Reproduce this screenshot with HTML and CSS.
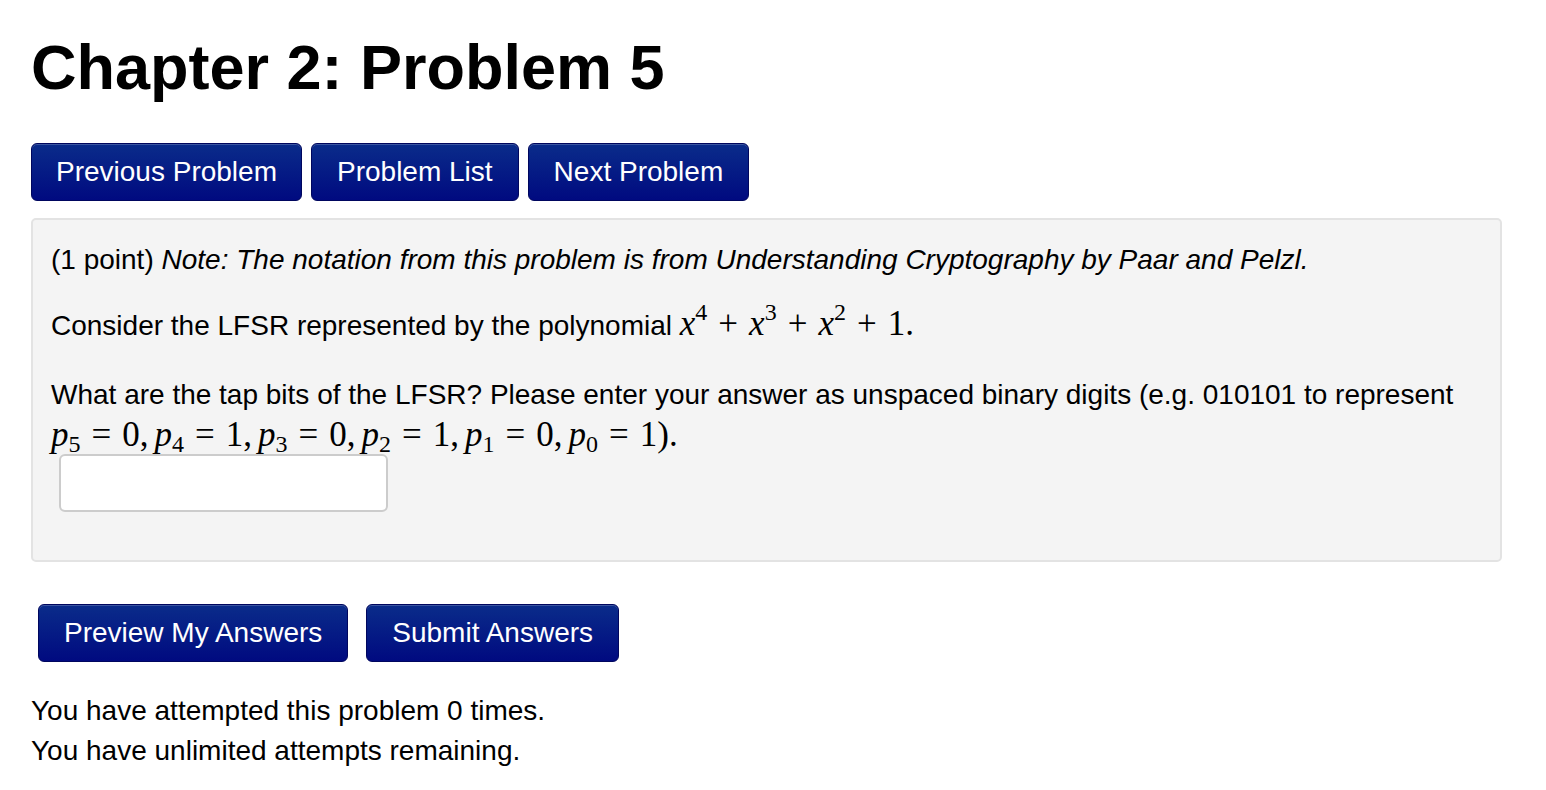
FILE: index.html
```html
<!DOCTYPE html>
<html>
<head>
    <meta charset="UTF-8">
    <title>Chapter 2: Problem 5</title>
    <link rel="stylesheet" href="styles.css">
</head>
<body>
<div class="page">
    <h1 class="title">Chapter 2: Problem 5</h1>

    <div class="nav-buttons">
        <a class="btn" href="#">Previous Problem</a>
        <a class="btn" href="#">Problem List</a>
        <a class="btn" href="#">Next Problem</a>
    </div>

    <!-- текст задачи -->
    <div class="problem">
        <p>(1 point) <i>Note: The notation from this problem is from Understanding Cryptography by Paar and Pelzl.</i></p>
        <p class="poly">Consider the LFSR represented by the polynomial <span class="math"><i>x</i><sup>4</sup><span class="op">+</span><i>x</i><sup>3</sup><span class="op">+</span><i>x</i><sup>2</sup><span class="op">+</span>1.</span></p>
        <p class="tight">What are the tap bits of the LFSR? Please enter your answer as unspaced binary digits (e.g. 010101 to represent
        <span class="math"><i>p</i><sub>5</sub><span class="rel">=</span>0,<span class="th"></span><i>p</i><sub>4</sub><span class="rel">=</span>1,<span class="th"></span><i>p</i><sub>3</sub><span class="rel">=</span>0,<span class="th"></span><i>p</i><sub>2</sub><span class="rel">=</span>1,<span class="th"></span><i>p</i><sub>1</sub><span class="rel">=</span>0,<span class="th"></span><i>p</i><sub>0</sub><span class="rel">=</span>1).</span></p>
        <input type="text" class="answer">
    </div>

    <div class="submit-buttons">
        <button class="btn">Preview My Answers</button>
        <button class="btn">Submit Answers</button>
    </div>

    <div class="attempts">
        <p>You have attempted this problem 0 times.</p>
        <p>You have unlimited attempts remaining.</p>
    </div>
</div>
</body>
</html>
```

FILE: styles.css
```css
body {
  margin: 0;
  background: #fff;
  color: #000;
  font-family: "Liberation Sans", Arial, sans-serif;
  font-size: 28px;
}

.page {
  padding: 22px 44px 0 31px;
}

.title {
  font-size: 63px;
  font-weight: bold;
  margin: 0;
  line-height: 90px;
}

/* кнопки */
.btn {
  display: inline-flex;
  align-items: center;
  justify-content: center;
  box-sizing: border-box;
  height: 58px;
  padding: 0 25px;
  border: 1px solid #00065e;
  border-radius: 6px;
  background: linear-gradient(#0a2c8a, #000a80);
  color: #fff;
  font-family: "Liberation Sans", Arial, sans-serif;
  font-size: 28px;
  text-decoration: none;
  box-shadow: inset 0 1px 0 rgba(255,255,255,0.2);
}

.nav-buttons .btn:first-child {
  padding: 0 24px;
}

.nav-buttons {
  display: flex;
  gap: 9px;
  margin-top: 31px;
}

.problem {
  margin-top: 17px;
  background: #f4f4f4;
  border: 2px solid #e3e3e3;
  border-radius: 5px;
  padding: 19px 18px 48px 18px;
  line-height: 42px;
}

.problem p {
  margin: 0 0 24px 0;
}

.problem p.poly {
  margin-bottom: 27px;
}

.problem p.tight {
  margin-bottom: 0;
}

/* формулы */
.math {
  font-family: "Liberation Serif", "Times New Roman", serif;
  font-size: 35px;
  line-height: 1;
  white-space: nowrap;
}

.math sup, .math sub {
  font-size: 24px;
  line-height: 0;
}

.math sup {
  vertical-align: 15px;
}

.math sub {
  vertical-align: -6px;
}

.math .op {
  margin: 0 11px;
}

.math .rel {
  margin: 0 11px;
}

.math .th {
  display: inline-block;
  width: 6px;
}

.answer {
  display: block;
  box-sizing: border-box;
  width: 329px;
  height: 58px;
  margin: -4px 0 0 8px;
  border: 2px solid #ccc;
  border-radius: 6px;
  background: #fff;
}

.submit-buttons {
  display: flex;
  gap: 18px;
  margin: 42px 0 0 7px;
}

.attempts {
  margin-top: 29px;
  line-height: 40px;
}

.attempts p {
  margin: 0;
}
```
